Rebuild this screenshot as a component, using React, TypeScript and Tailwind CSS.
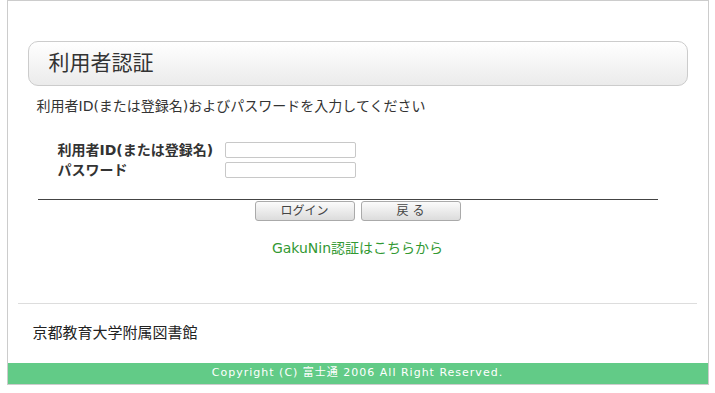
const jp = { fontFamily: '"DejaVu Sans", "Noto Sans CJK JP", sans-serif' };

export default function App() {
  return (
    <div className="w-full bg-white" style={jp}>
      <div className="mx-auto w-[702px] border border-[#cccccc] bg-white text-[#333]">
        {/* title */}
        <div className="mx-[20px] mt-[40px] flex h-[45px] items-center rounded-[10px] border border-[#cccccc] bg-gradient-to-b from-white to-[#ebebeb] pl-[20px]">
          <span className="text-[21px] leading-none text-[#333]">利用者認証</span>
        </div>

        <div className="mt-[12px] pl-[29px] text-[14px] leading-[16px]">
          利用者ID(または登録名)およびパスワードを入力してください
        </div>

        {/* form */}
        <div className="mt-[26px] pl-[50px]">
          <div className="flex h-[20px] items-center">
            <div className="w-[167px] text-[14px] font-bold leading-none">利用者ID(または登録名)</div>
            <input className="h-[16px] w-[131px] rounded-[2px] border border-[#c8c8c8] bg-white" />
          </div>
          <div className="flex h-[20px] items-center">
            <div className="w-[167px] text-[14px] font-bold leading-none">パスワード</div>
            <input type="password" className="h-[16px] w-[131px] rounded-[2px] border border-[#c8c8c8] bg-white" />
          </div>
        </div>

        <div className="ml-[30px] mt-[19px] h-px w-[620px] bg-[#444]" />

        <div className="mt-[1px] flex justify-center gap-[6px]">
          <button className="h-[20px] w-[100px] rounded-[3px] border border-[#aaaaaa] bg-gradient-to-b from-[#fbfbfb] to-[#dcdcdc] text-[12px] leading-none text-[#444]">
            ログイン
          </button>
          <button className="h-[20px] w-[100px] rounded-[3px] border border-[#aaaaaa] bg-gradient-to-b from-[#fbfbfb] to-[#dcdcdc] text-[12px] leading-none text-[#444]">
            戻 る
          </button>
        </div>

        <div className="mt-[19px] text-center text-[14px] leading-[16px] text-[#339933]">
          GakuNin認証はこちらから
        </div>

        <div className="ml-[10px] mt-[47px] h-px w-[679px] bg-[#dddddd]" />

        <div className="mt-[21px] pl-[25px] text-[15px] leading-[16px] text-[#222]">京都教育大学附属図書館</div>

        <div className="mt-[22px] flex h-[21px] items-center justify-center bg-[#62cb87] text-[11px] tracking-[1px] text-white">
          Copyright (C) 富士通 2006 All Right Reserved.
        </div>
      </div>
    </div>
  );
}
